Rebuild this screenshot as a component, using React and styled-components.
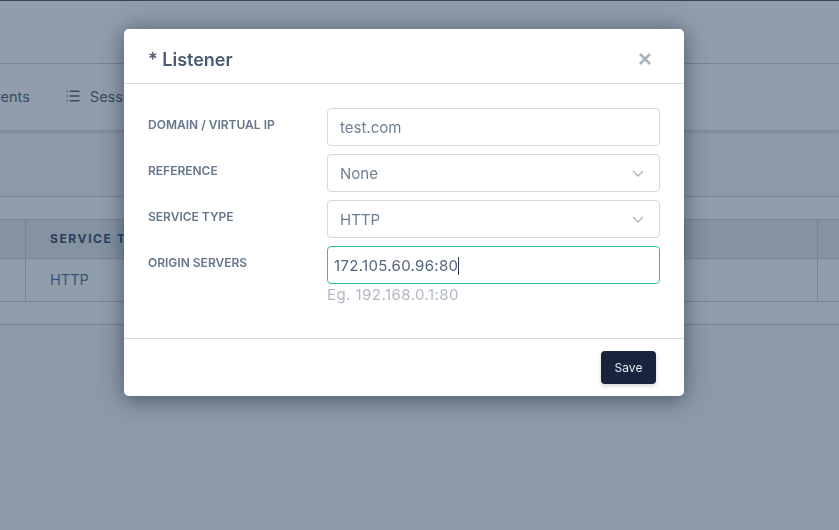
import React from 'react';
import styled, { createGlobalStyle } from 'styled-components';
import { List } from 'lucide-react';

const Global = createGlobalStyle`
  html, body {
    margin: 0;
    height: 100%;
    overflow: hidden;
    background: #f7f7f8;
    font-family: "Inter", "Noto Sans", sans-serif;
  }
  * { box-sizing: border-box; }
`;

const Page = styled.div`
  width: 839px;
  height: 530px;
  overflow: hidden;
  background: #f7f7f8;
  border-top: 1px solid #4f4a5a;
`;

const Header = styled.div`
  height: 63px;
  background: #fff;
  border-bottom: 1px solid #cbd3dc;
`;

const Nav = styled.div`
  height: 66px;
  display: flex;
  align-items: center;
  gap: 35px;
  padding-bottom: 2px;
  margin-left: -16px;
  background: #fff;
  color: #4a5b70;
  font-size: 14.5px;
  box-shadow: 0 2px 3px rgba(30, 45, 70, 0.18);
`;

const NavItem = styled.div`
  display: flex;
  align-items: center;
  gap: 9px;
  white-space: nowrap;
`;

const Toolbar = styled.div`
  height: 67px;
  border-bottom: 1px solid #cbd3dc;
`;

const Strip = styled.div`
  height: 23px;
  background: #fff;
  border-bottom: 1px solid #c3ccd6;
`;

const Row = styled.div`
  display: grid;
  grid-template-columns: 26px 1fr 21px;
  height: ${(p) => p.$height}px;
  background: ${(p) => (p.$head ? '#e4e8ed' : '#fff')};
  border-bottom: 1px solid #c3ccd6;
`;

const Cell = styled.div`
  display: flex;
  align-items: center;
  padding: 0 0 2px 24px;
  border-right: 1px solid ${(p) => (p.$plain ? 'transparent' : '#c3ccd6')};
  white-space: nowrap;
  overflow: hidden;
`;

const HeadText = styled.span`
  font-size: 12px;
  font-weight: 700;
  letter-spacing: 1.6px;
  color: #2f4360;
`;

const LinkText = styled.span`
  font-size: 14.5px;
  color: #3f6ea8;
`;

const Spacer = styled.div`
  height: 23px;
  background: #fff;
  border-bottom: 1px solid #c3ccd6;
`;

const Scrim = styled.div`
  position: fixed;
  inset: 0;
  background: rgba(36, 60, 85, 0.5);
`;

const Modal = styled.div`
  position: fixed;
  left: 124px;
  top: 29px;
  width: 560px;
  height: 367px;
  background: #fff;
  border-radius: 5px;
  display: flex;
  flex-direction: column;
  box-shadow: 0 0 24px rgba(25, 40, 65, 0.45), 0 8px 16px rgba(25, 40, 65, 0.2);
`;

const ModalHead = styled.div`
  height: 55px;
  padding: 6px 32px 0 24px;
  display: flex;
  align-items: center;
  justify-content: space-between;
  border-bottom: 1px solid #d8dbe0;
`;

const Title = styled.h2`
  margin: 0;
  font-size: 18px;
  font-weight: 600;
  color: #4a5b70;
`;

const Close = styled.svg`
  width: 14px;
  height: 14px;
  stroke: #a9b2bf;
  stroke-width: 2.6;
  fill: none;
`;

const Form = styled.div`
  flex: 1;
  padding: 24px 24px 0;
  display: flex;
  flex-direction: column;
  gap: 8px;
`;

const Field = styled.div`
  display: grid;
  grid-template-columns: 179px 333px;
`;

const Label = styled.div`
  padding-top: 9px;
  font-size: 12px;
  line-height: 16px;
  font-weight: 600;
  color: #65758a;
  text-transform: uppercase;
`;

const Input = styled.div`
  height: 38px;
  display: flex;
  align-items: center;
  justify-content: space-between;
  padding: 0 ${(p) => (p.$focus ? '6px' : '12px')};
  border: 1px solid ${(p) => (p.$focus ? '#2fbf9c' : '#d5d8de')};
  border-radius: 4px;
  font-size: 15px;
  letter-spacing: ${(p) => (p.$focus ? '0.32px' : '0')};
  color: ${(p) => (p.$focus ? '#55657a' : '#6f7f92')};
`;

const Caret = styled.span`
  display: inline-block;
  width: 1px;
  height: 18px;
  background: #2d3b50;
  vertical-align: -4px;
`;

const Chevron = styled.svg`
  width: 12px;
  height: 7px;
  stroke: #a9b2bf;
  stroke-width: 1.3;
  fill: none;
  margin-right: 3px;
`;

const Hint = styled.div`
  margin-top: 1px;
  font-size: 15px;
  line-height: 20px;
  letter-spacing: 0.45px;
  color: #b1b8c3;
`;

const ModalFoot = styled.div`
  height: 58px;
  padding: 12px 28px 0 0;
  display: flex;
  justify-content: flex-end;
  border-top: 1px solid #d8dbe0;
`;

const Save = styled.button`
  width: 55px;
  height: 33px;
  border: 0;
  border-radius: 4px;
  background: #18233d;
  color: #e8ebf0;
  font-family: inherit;
  font-size: 12px;
  box-shadow: 0 2px 4px rgba(25, 40, 65, 0.2);
`;

function ChevronIcon() {
  return (
    <Chevron viewBox="0 0 12 7">
      <path d="M1 1l5 5 5-5" />
    </Chevron>
  );
}

export default function App() {
  return (
    <>
      <Global />
      <Page>
        <Header />
        <Nav>
          <NavItem>Events</NavItem>
          <NavItem>
            <List size={16} strokeWidth={2.3} />
            Sessions
          </NavItem>
        </Nav>
        <Toolbar />
        <Strip />
        <Row $head $height={39}>
          <Cell />
          <Cell>
            <HeadText>SERVICE TYPE</HeadText>
          </Cell>
          <Cell $plain />
        </Row>
        <Row $height={43}>
          <Cell />
          <Cell>
            <LinkText>HTTP</LinkText>
          </Cell>
          <Cell $plain />
        </Row>
        <Spacer />
      </Page>
      <Scrim />
      <Modal>
        <ModalHead>
          <Title>* Listener</Title>
          <Close viewBox="0 0 14 14">
            <path d="M2 2l10 10M12 2L2 12" />
          </Close>
        </ModalHead>
        <Form>
          <Field>
            <Label>Domain / Virtual IP</Label>
            <Input>test.com</Input>
          </Field>
          <Field>
            <Label>Reference</Label>
            <Input>
              None
              <ChevronIcon />
            </Input>
          </Field>
          <Field>
            <Label>Service Type</Label>
            <Input>
              HTTP
              <ChevronIcon />
            </Input>
          </Field>
          <Field>
            <Label>Origin Servers</Label>
            <div>
              <Input $focus>
                <span>
                  172.105.60.96:80
                  <Caret />
                </span>
              </Input>
              <Hint>Eg. 192.168.0.1:80</Hint>
            </div>
          </Field>
        </Form>
        <ModalFoot>
          <Save>Save</Save>
        </ModalFoot>
      </Modal>
    </>
  );
}
